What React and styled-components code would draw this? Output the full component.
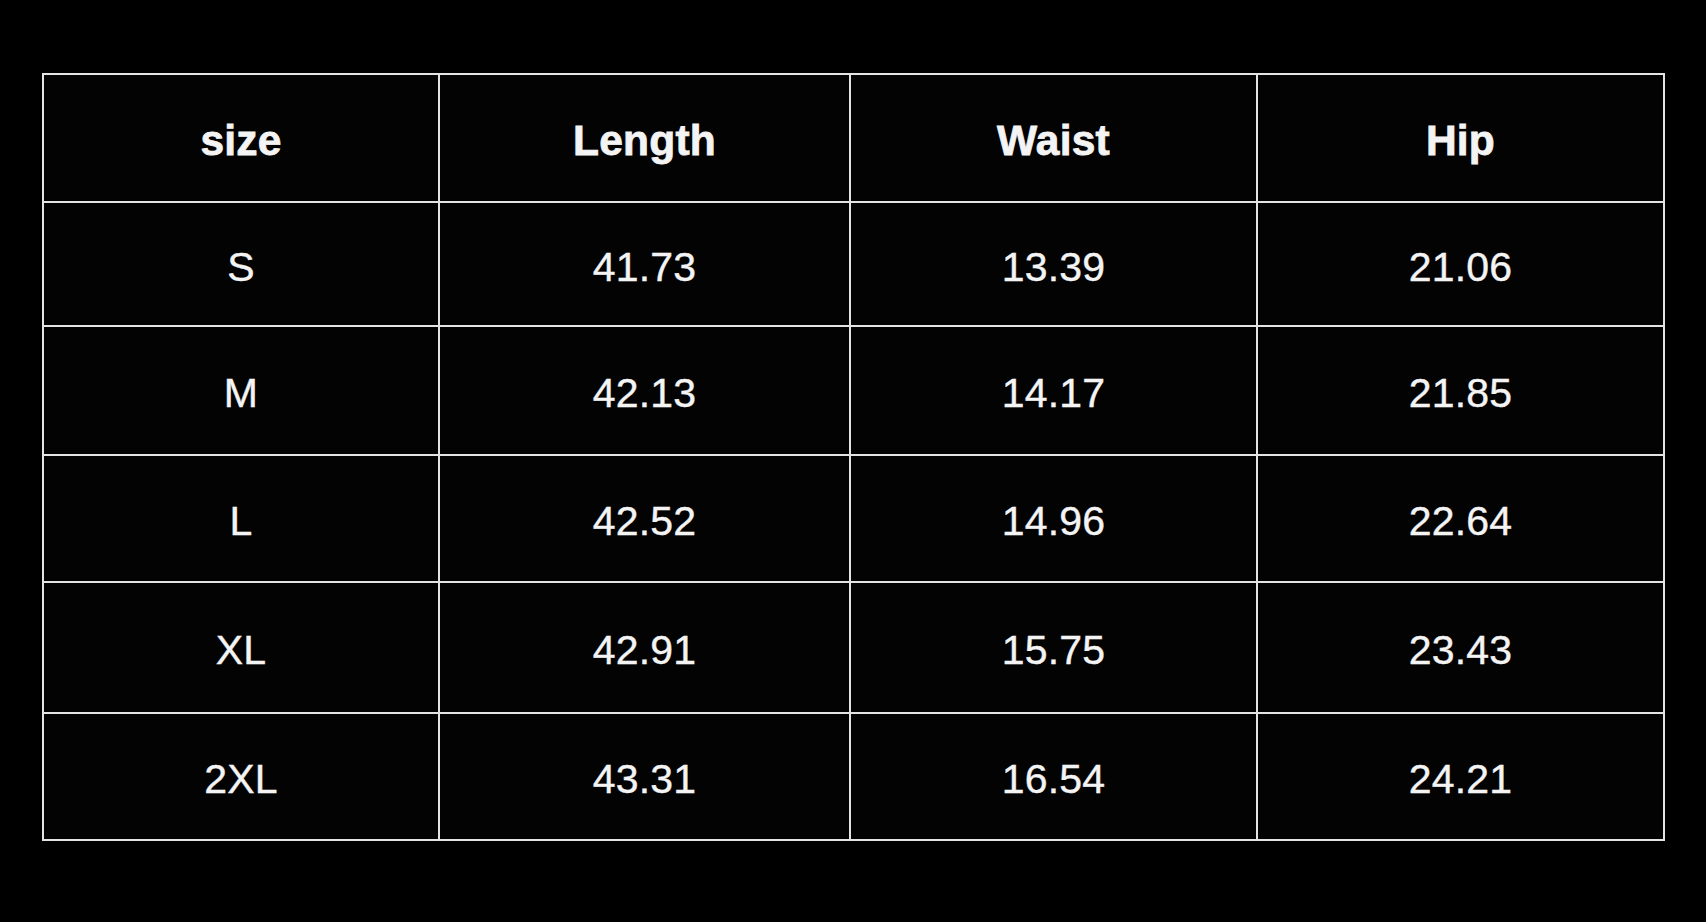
import styled, { createGlobalStyle } from "styled-components";

const GlobalStyle = createGlobalStyle`
  html, body {
    margin: 0;
    padding: 0;
    background: #000;
  }
  body {
    font-family: "Liberation Sans", Arial, sans-serif;
    color: #f4f4f4;
  }
`;

const headers = ["size", "Length", "Waist", "Hip"];

const rows = [
  ["S", "41.73", "13.39", "21.06"],
  ["M", "42.13", "14.17", "21.85"],
  ["L", "42.52", "14.96", "22.64"],
  ["XL", "42.91", "15.75", "23.43"],
  ["2XL", "43.31", "16.54", "24.21"],
];

const Page = styled.div`
  width: 1706px;
  height: 922px;
  padding: 73px 0 0 42px;
  box-sizing: border-box;
  background: #000;
`;

const Grid = styled.div`
  display: grid;
  grid-template-columns: 394px 409px 405px 405px;
  grid-template-rows: 126px 122px 127px 125px 129px 125px;
  gap: 2px;
  padding: 2px;
  width: max-content;
  background: #e4e4e4;
`;

const Cell = styled.div`
  display: flex;
  align-items: center;
  justify-content: center;
  padding-top: 6px;
  box-sizing: border-box;
  background: #030303;
  font-size: ${(p) => (p.$head ? "42.5px" : "41px")};
  font-weight: ${(p) => (p.$head ? 700 : 400)};
  -webkit-text-stroke: ${(p) => (p.$head ? "0.8px" : "0.4px")} #f4f4f4;
  letter-spacing: 0.2px;
  color: #f4f4f4;
`;

export default function App() {
  return (
    <>
      <GlobalStyle />
      <Page>
        <Grid>
          {headers.map((h) => (
            <Cell key={h} $head>
              {h}
            </Cell>
          ))}
          {rows.map((r) =>
            r.map((v, i) => <Cell key={r[0] + i}>{v}</Cell>)
          )}
        </Grid>
      </Page>
    </>
  );
}
